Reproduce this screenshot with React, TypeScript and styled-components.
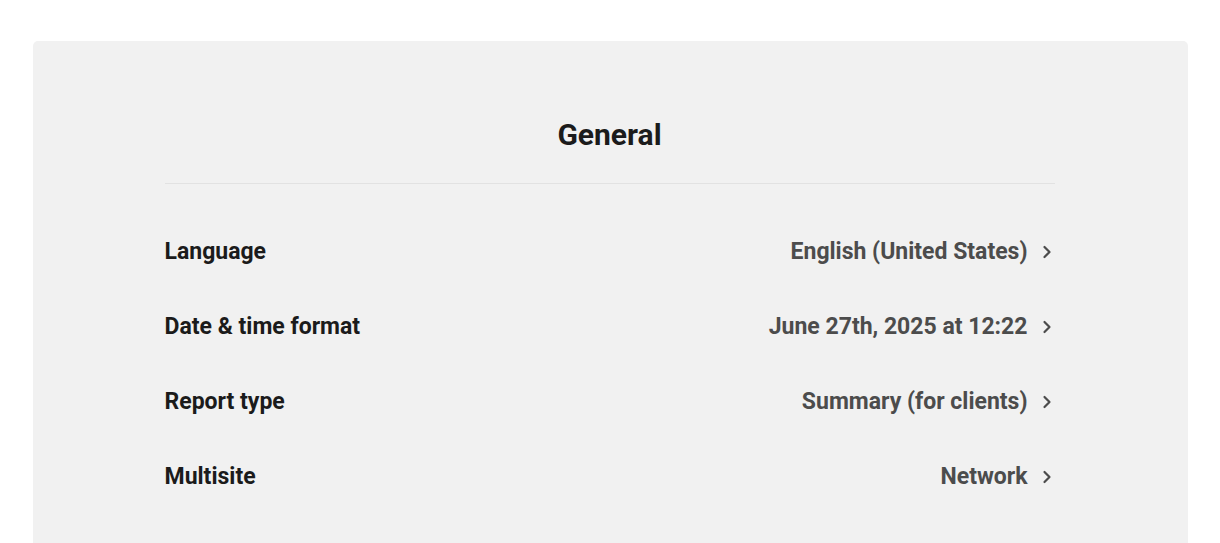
import React from "react";
import styled, { createGlobalStyle } from "styled-components";

const Global = createGlobalStyle`
  html, body { margin: 0; padding: 0; background: #ffffff; }
  body { font-family: Roboto, "Noto Sans", Arial, sans-serif; }
`;

const Page = styled.div`
  padding: 41px 32px 0 33px;
`;

const Card = styled.section`
  background: #f1f1f1;
  border-radius: 5px 5px 0 0;
  padding: 74px 0 40px;
  min-height: 462px;
  box-sizing: border-box;
`;

const Inner = styled.div`
  width: 890px;
  padding-right: 2px;
  margin: 0 auto;
`;

const Title = styled.h2`
  margin: 0;
  text-align: center;
  font-size: 30px;
  font-weight: 700;
  color: #1b1b1b;
  line-height: 40px;
  padding-bottom: 28px;
  border-bottom: 1px solid #e2e2e2;
`;

const List = styled.div`
  display: flex;
  flex-direction: column;
  padding-top: 30px;
`;

const Row = styled.div`
  display: flex;
  align-items: center;
  justify-content: space-between;
  height: 75px;
`;

const Label = styled.span`
  font-size: 23px;
  font-weight: 700;
  color: #1b1b1b;
`;

const Value = styled.span`
  display: flex;
  align-items: center;
  gap: 11px;
  font-size: 23px;
  font-weight: 700;
  color: #4c4c4c;
`;

const ChevronIcon = styled.svg`
  display: block;
  width: 16px;
  height: 16px;
`;

const Chevron = () => (
  <ChevronIcon viewBox="0 0 16 16" aria-hidden="true">
    <path d="M5.5 3 L10.5 8 L5.5 13" fill="none" stroke="#4c4c4c" strokeWidth="2.2" strokeLinecap="round" strokeLinejoin="round" />
  </ChevronIcon>
);

const rows = [
  ["Language", "English (United States)"],
  ["Date & time format", "June 27th, 2025 at 12:22"],
  ["Report type", "Summary (for clients)"],
  ["Multisite", "Network"],
];

export default function App() {
  return (
    <>
      <Global />
      <Page>
        <Card>
          <Inner>
            <Title>General</Title>
            <List>
              {rows.map(([l, v]) => (
                <Row key={l}>
                  <Label>{l}</Label>
                  <Value>
                    {v}
                    <Chevron />
                  </Value>
                </Row>
              ))}
            </List>
          </Inner>
        </Card>
      </Page>
    </>
  );
}
